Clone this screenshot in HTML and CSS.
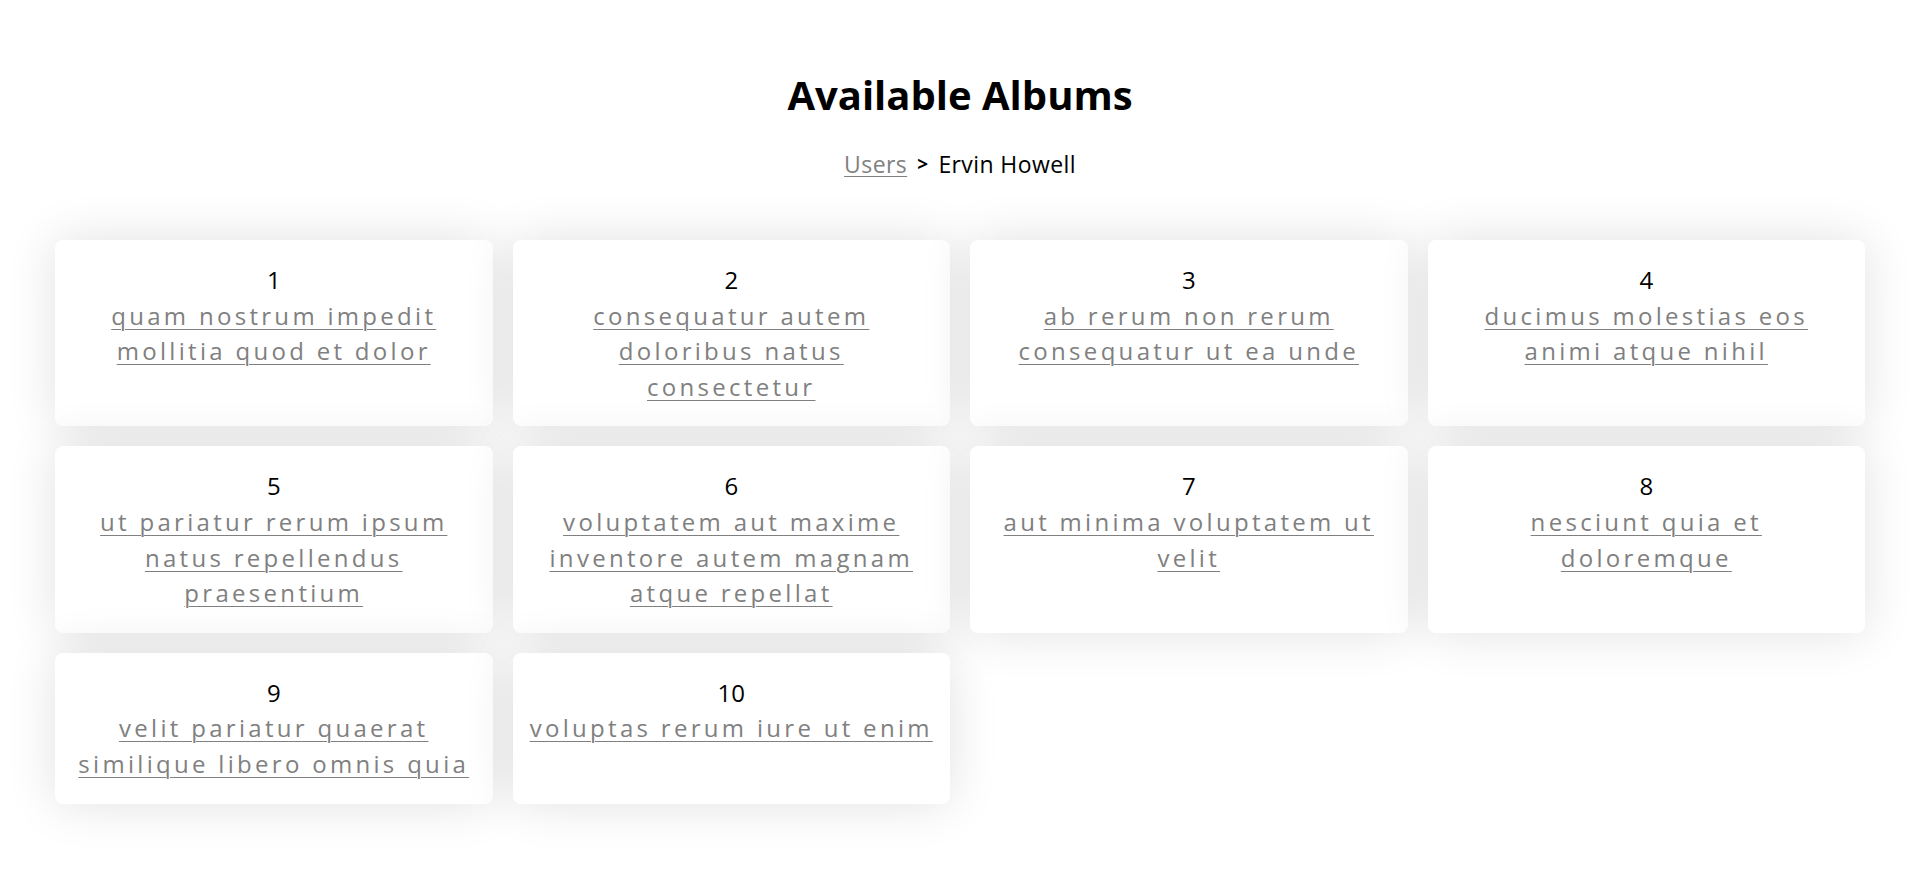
FILE: index.html
```html
<!DOCTYPE html>
<html lang="en">
<head>
<meta charset="utf-8">
<title>Available Albums</title>
<link rel="stylesheet" href="styles.css">
</head>
<body>
<main class="page">
  <h1 class="title">Available Albums</h1>
  <nav class="crumbs">
    <a class="crumb-link" href="#">Users</a>
    <span class="crumb-sep">&gt;</span>
    <span class="crumb-current">Ervin Howell</span>
  </nav>
  <section class="grid">
    <div class="card"><div class="num">1</div><a class="album" href="#">quam nostrum impedit mollitia quod et dolor</a></div>
    <div class="card"><div class="num">2</div><a class="album" href="#">consequatur autem doloribus natus<br>consectetur</a></div>
    <div class="card"><div class="num">3</div><a class="album" href="#">ab rerum non rerum consequatur ut ea unde</a></div>
    <div class="card"><div class="num">4</div><a class="album" href="#">ducimus molestias eos animi atque nihil</a></div>
    <div class="card"><div class="num">5</div><a class="album" href="#">ut pariatur rerum ipsum natus repellendus praesentium</a></div>
    <div class="card"><div class="num">6</div><a class="album" href="#">voluptatem aut maxime inventore autem magnam atque repellat</a></div>
    <div class="card"><div class="num">7</div><a class="album" href="#">aut minima voluptatem ut velit</a></div>
    <div class="card"><div class="num">8</div><a class="album" href="#">nesciunt quia et doloremque</a></div>
    <div class="card"><div class="num">9</div><a class="album" href="#">velit pariatur quaerat similique libero omnis quia</a></div>
    <div class="card"><div class="num">10</div><a class="album" href="#">voluptas rerum iure ut enim</a></div>
  </section>
</main>
</body>
</html>
```

FILE: styles.css
```css
html, body {
  margin: 0;
  padding: 0;
  background: #ffffff;
}

body {
  font-family: "Open Sans", "Liberation Sans", sans-serif;
  color: #000000;
}

.page {
  display: flex;
  flex-direction: column;
  align-items: center;
  padding-top: 71px;
  padding-bottom: 80px;
}

.title {
  margin: 0;
  font-size: 40px;
  line-height: 48px;
  font-weight: 700;
  color: #000;
}

.crumbs {
  margin-top: 28px;
  display: flex;
  align-items: center;
  gap: 10px;
  font-size: 23px;
  line-height: 34px;
  letter-spacing: 0.4px;
}

.crumb-link {
  color: #808080;
  text-decoration: underline;
  text-decoration-thickness: 1px;
  text-underline-offset: 3px;
}

.crumb-sep {
  font-size: 19px;
  font-weight: 700;
  color: #000;
}

.crumb-current {
  color: #000;
}

.grid {
  margin-top: 59px;
  align-self: stretch;
  padding: 0 55px;
  display: grid;
  grid-template-columns: repeat(4, 1fr);
  gap: 20px;
  align-items: stretch;
}

.card {
  background: #ffffff;
  border-radius: 8px;
  box-shadow: 0 0 50px rgba(0, 0, 0, 0.12);
  padding: 22px 16px;
  text-align: center;
  display: flex;
  flex-direction: column;
  align-items: center;
}

.num {
  font-size: 24px;
  line-height: 35.6px;
  color: #000;
}

.album {
  font-size: 24px;
  line-height: 35.6px;
  letter-spacing: 3.3px;
  color: #808080;
  text-decoration: underline;
  text-decoration-thickness: 1px;
  text-underline-offset: 4px;
}
```
